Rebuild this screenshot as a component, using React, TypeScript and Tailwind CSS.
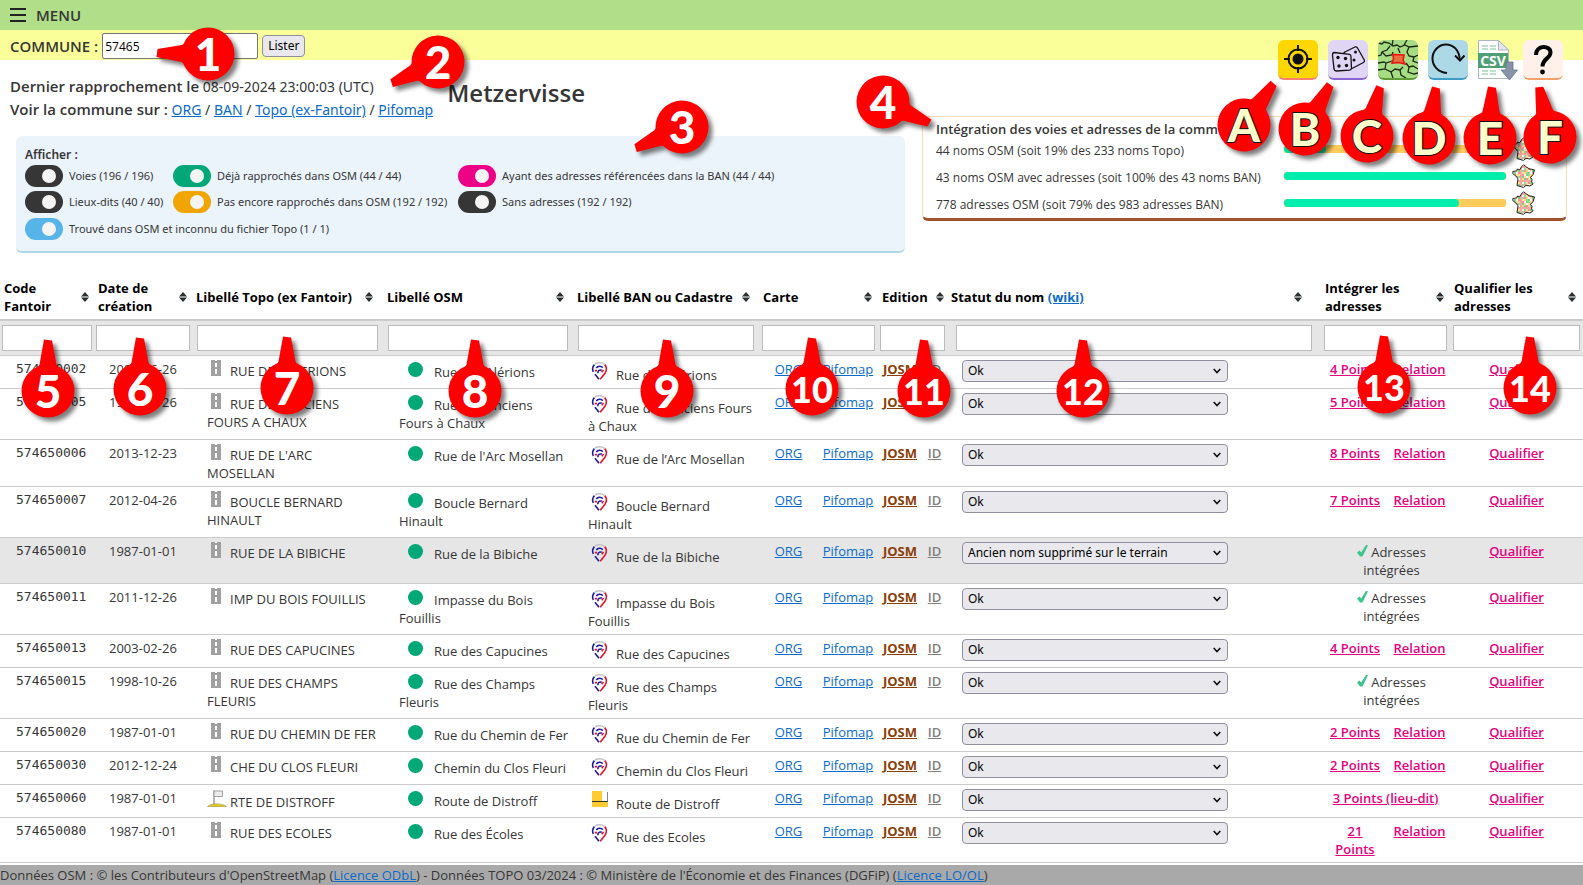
import React from "react";

type Row = {
  code: string;
  date: string;
  topo: string;
  osm: string;
  ban: string;
  status?: string;
  points?: string;
  done?: boolean;
  place?: boolean;
};

const rows: Row[] = [
  { code: "574650002", date: "2003-06-26", topo: "RUE DES ALERIONS", osm: "Rue des Alérions", ban: "Rue des Alérions", points: "4 Points" },
  { code: "574650005", date: "1998-10-26", topo: "RUE DES ANCIENS FOURS A CHAUX", osm: "Rue des Anciens Fours à Chaux", ban: "Rue des Anciens Fours à Chaux", points: "5 Points" },
  { code: "574650006", date: "2013-12-23", topo: "RUE DE L'ARC MOSELLAN", osm: "Rue de l'Arc Mosellan", ban: "Rue de l’Arc Mosellan", points: "8 Points" },
  { code: "574650007", date: "2012-04-26", topo: "BOUCLE BERNARD HINAULT", osm: "Boucle Bernard Hinault", ban: "Boucle Bernard Hinault", points: "7 Points" },
  { code: "574650010", date: "1987-01-01", topo: "RUE DE LA BIBICHE", osm: "Rue de la Bibiche", ban: "Rue de la Bibiche", status: "Ancien nom supprimé sur le terrain", done: true },
  { code: "574650011", date: "2011-12-26", topo: "IMP DU BOIS FOUILLIS", osm: "Impasse du Bois Fouillis", ban: "Impasse du Bois Fouillis", done: true },
  { code: "574650013", date: "2003-02-26", topo: "RUE DES CAPUCINES", osm: "Rue des Capucines", ban: "Rue des Capucines", points: "4 Points" },
  { code: "574650015", date: "1998-10-26", topo: "RUE DES CHAMPS FLEURIS", osm: "Rue des Champs Fleuris", ban: "Rue des Champs Fleuris", done: true },
  { code: "574650020", date: "1987-01-01", topo: "RUE DU CHEMIN DE FER", osm: "Rue du Chemin de Fer", ban: "Rue du Chemin de Fer", points: "2 Points" },
  { code: "574650030", date: "2012-12-24", topo: "CHE DU CLOS FLEURI", osm: "Chemin du Clos Fleuri", ban: "Chemin du Clos Fleuri", points: "2 Points" },
  { code: "574650060", date: "1987-01-01", topo: "RTE DE DISTROFF", osm: "Route de Distroff", ban: "Route de Distroff", points: "3 Points (lieu-dit)", place: true },
  { code: "574650080", date: "1987-01-01", topo: "RUE DES ECOLES", osm: "Rue des Écoles", ban: "Rue des Ecoles", points: "21 Points" },
];

const headers: { label: React.ReactNode; name: string; span?: number }[] = [
  { name: "Code Fantoir", label: <>Code<br />Fantoir</> },
  { name: "Date de création", label: <>Date de<br />création</> },
  { name: "Libellé Topo", label: "Libellé Topo (ex Fantoir)" },
  { name: "Libellé OSM", label: "Libellé OSM" },
  { name: "Libellé BAN ou Cadastre", label: "Libellé BAN ou Cadastre" },
  { name: "Carte", label: "Carte", span: 2 },
  { name: "Edition", label: "Edition", span: 2 },
  { name: "Statut du nom", label: <>Statut du nom <a href="#wiki" className="text-[#0b6bcb] underline">(wiki)</a></> },
  { name: "Intégrer les adresses", label: <>Intégrer les<br />adresses</>, span: 2 },
  { name: "Qualifier les adresses", label: <>Qualifier les<br />adresses</> },
];

const link = "text-[#0b6bcb] underline";
const pink = "font-semibold text-[#e6007e] underline";
const cell = "border-b border-[#ccc] py-1 align-top";

function SortIcon() {
  return (
    <svg viewBox="0 0 8 10" className="h-[10px] w-2 shrink-0">
      <path d="M4 0 8 4.500H0z M0 5.500h8L4 10z" fill="#2b3033" />
      <path d="M0 4.500h8v1H0z" fill="#9a9d9f" />
    </svg>
  );
}

function RoadIcon() {
  return (
    <svg viewBox="0 0 20 16" className="mr-[3px] inline-block h-4 w-5 align-baseline">
      <path d="M4 0h10v16H4z" fill="#a0a0a0" />
      <path d="M8 0h2v1H8z M8 3h2v4H8z M8 9h2v5H8z" fill="#fff" />
    </svg>
  );
}

function FlagIcon() {
  return (
    <svg viewBox="0 0 20 18" className="mr-[3px] inline-block h-[18px] w-5 align-baseline">
      <path d="M.5 17.500c3-3.500 14-3.500 19 0z" fill="#e3c91d" stroke="#a09030" strokeWidth=".6" />
      <path d="M7 1.500V15.500" stroke="#888" strokeWidth="1.200" />
      <path d="M7 2h8.500v5.500H7z" fill="#ececec" stroke="#999" strokeWidth=".9" />
    </svg>
  );
}

function DotIcon() {
  return (
    <svg viewBox="0 0 31 17" className="mr-1 inline-block h-[17px] w-[31px] align-baseline">
      <circle cx="16.500" cy="9.500" r="7.500" fill="#00a878" />
    </svg>
  );
}

function BanIcon() {
  return (
    <svg viewBox="0 0 24 20" fill="none" strokeWidth="1.600" className="mr-1 inline-block h-5 w-6 align-baseline">
      <path d="M7 4C9.500 2.300 14 2.200 16.500 4.300" stroke="#c4c4c4" />
      <path d="M6.400 4.600C4.300 7 4.200 9.500 5.300 11.800M7 14.200 11 19.300" stroke="#1c1c9c" />
      <path d="M16.700 4.600C19.200 7.300 18.800 10.300 17 13.200L12.200 19.300" stroke="#e1142c" />
      <path d="M8.300 8C9.800 5.900 13 5.700 14.800 7.600" stroke="#1c1c9c" />
      <path d="M9.800 13.200C10 10.500 11.500 9.300 13.800 10.300" stroke="#1c1c9c" />
      <path d="M6.800 10.600h2.300M13.800 12.400l1.600-2.600" stroke="#e1142c" />
    </svg>
  );
}

function CadastreIcon() {
  return (
    <svg viewBox="0 0 24 20" className="mr-1 inline-block h-5 w-6 align-baseline">
      <path d="M4 2h10v10h6v6H4z" fill="#ffcb31" />
      <path d="M4 12.500h16" stroke="#333" strokeWidth="1" />
      <path d="M19.500 3v9.500" stroke="#777" strokeWidth=".9" />
    </svg>
  );
}

function FranceIcon() {
  const colours = ["#ff8f8f", "#7fd18a", "#ffe07a", "#f7a7a0", "#ffffff", "#8fdc9a", "#ffd9a0"];
  const dots: React.ReactNode[] = [];
  for (let y = 2; y < 22; y += 2) {
    for (let x = 2; x < 22; x += 2) {
      dots.push(<rect key={`${x}-${y}`} x={x} y={y} width="2" height="2" fill={colours[(x * 3 + y * 5 + ((x * y) >> 2)) % 7]} />);
    }
  }
  const shape = "M11.500.8l3 2.200 2.500 1.700 5.500 1.200-1.400 4.600-2.600 3.100 1.600 1.700-.6 2.600 1.600 2-3.100 2.100-4-.7-2.500 2.100-6.500-1.800 1-6.800-2.100-2.800L.9 9.800.8 7.500l4-.6.5-1.800 2.600.6L9.300 3z";
  return (
    <svg viewBox="0 0 24 24" className="mb-1 size-6 shrink-0">
      <clipPath id="france-shape"><path d={shape} /></clipPath>
      <g clipPath="url(#france-shape)">{dots}</g>
      <path d={shape} fill="none" stroke="#222" strokeWidth="1" />
    </svg>
  );
}

const toggles: { label: string; color: string; wide?: boolean }[] = [
  { label: "Voies (196 / 196)", color: "bg-[#363636]" },
  { label: "Déjà rapprochés dans OSM (44 / 44)", color: "bg-[#00a878]" },
  { label: "Ayant des adresses référencées dans la BAN (44 / 44)", color: "bg-[#ee0086]" },
  { label: "Lieux-dits (40 / 40)", color: "bg-[#363636]" },
  { label: "Pas encore rapprochés dans OSM (192 / 192)", color: "bg-[#f0a500]" },
  { label: "Sans adresses (192 / 192)", color: "bg-[#363636]" },
  { label: "Trouvé dans OSM et inconnu du fichier Topo (1 / 1)", color: "bg-[#56b4e9]", wide: true },
];

const stats = [
  { label: "44 noms OSM (soit 19% des 233 noms Topo)", value: 19 },
  { label: "43 noms OSM avec adresses (soit 100% des 43 noms BAN)", value: 100 },
  { label: "778 adresses OSM (soit 79% des 983 adresses BAN)", value: 79 },
];

const callouts = [
  { text: "1", x: 208, y: 54, tx: 157, ty: 53 },
  { text: "2", x: 438, y: 62, tx: 392, ty: 83 },
  { text: "3", x: 682, y: 127, tx: 636, ty: 148 },
  { text: "4", x: 883, y: 102, tx: 929, ty: 123 },
  { text: "A", x: 1244, y: 125, tx: 1274, ty: 83 },
  { text: "B", x: 1305, y: 129, tx: 1330, ty: 85 },
  { text: "C", x: 1367, y: 136, tx: 1380, ty: 87 },
  { text: "D", x: 1429, y: 138, tx: 1436, ty: 87 },
  { text: "E", x: 1490, y: 138, tx: 1492, ty: 86 },
  { text: "F", x: 1550, y: 137, tx: 1539, ty: 86 },
  { text: "5", x: 48, y: 391, tx: 48, ty: 340 },
  { text: "6", x: 140, y: 389, tx: 140, ty: 338 },
  { text: "7", x: 287, y: 388, tx: 287, ty: 336 },
  { text: "8", x: 475, y: 391, tx: 475, ty: 340 },
  { text: "9", x: 667, y: 391, tx: 667, ty: 339 },
  { text: "10", x: 812, y: 389, tx: 812, ty: 338 },
  { text: "11", x: 924, y: 391, tx: 924, ty: 340 },
  { text: "12", x: 1083, y: 391, tx: 1083, ty: 340 },
  { text: "13", x: 1384, y: 387, tx: 1384, ty: 335 },
  { text: "14", x: 1530, y: 388, tx: 1530, ty: 336 },
];

function Callout({ text, x, y, tx, ty }: (typeof callouts)[number]) {
  const angle = (Math.atan2(tx - x, y - ty) * 180) / Math.PI;
  const letter = /[A-F]/.test(text);
  const tone = letter
    ? "text-[46px] font-black text-[#ffffcc] [-webkit-text-stroke:2px_#111] [paint-order:stroke_fill]"
    : text.length > 1
      ? "text-[36px] font-black text-white"
      : "text-[46px] font-black text-white";
  return (
    <div className="pointer-events-none absolute flex size-14 -translate-x-1/2 -translate-y-1/2 items-center justify-center" style={{ left: x, top: y }}>
      <svg viewBox="-28 -28 56 56" className="absolute inset-0 size-14 overflow-visible drop-shadow-[4px_4px_2px_rgba(0,0,0,0.5)]">
        <g transform={`rotate(${angle})`} fill="#fe0000">
          <circle r="26.500" />
          <path d="M-4-51.500 4-50.500 8.500-26.500Q9.500-24 12-22H-12Q-9.500-24-8.500-26.500z" />
        </g>
      </svg>
      <span className={`relative font-['Lato',sans-serif] leading-none ${tone}`}>{text}</span>
    </div>
  );
}

function Toolbar() {
  const base = "size-10 shrink-0 overflow-hidden rounded-md border-b-2";
  return (
    <nav aria-label="Outils" className="absolute top-10 right-5 flex gap-[10px]">
      <button aria-label="Localiser" className={`${base} border-[#fa8072] bg-[#ffd700]`}>
        <svg viewBox="0 0 40 38" className="w-10" fill="none" stroke="#111" strokeWidth="2">
          <circle cx="20" cy="19" r="9.500" />
          <circle cx="20" cy="19" r="5.500" fill="#111" stroke="none" />
          <path d="M20 5v6M20 27v6M6 19h6M28 19h6" />
        </svg>
      </button>
      <button aria-label="Commune au hasard" className={`${base} border-[#8a63d2] bg-[#e0d5f5]`}>
        <svg viewBox="0 0 40 38" className="w-10" fill="none" stroke="#111" strokeWidth="1.300" strokeLinejoin="round">
          <path d="M15.500 13.500 16.800 12 27 7Q28.500 6.500 29.500 8L36.300 20Q37 21.500 35.500 22.500L24 28.500" />
          <path d="M6.300 12.500 21.500 14.300Q22.800 14.500 22.900 16L23.500 28Q23.500 30 21.500 30.200L8.200 31Q6.500 31 6 29L4.500 15Q4.500 12.500 6.300 12.500z" />
          <g fill="#111" stroke="none">
            <circle cx="10" cy="17.500" r="1.700" /><circle cx="17.500" cy="18.500" r="1.700" />
            <circle cx="11" cy="26" r="1.700" /><circle cx="18.500" cy="25.500" r="1.700" />
            <circle cx="27.500" cy="12" r="1.500" /><circle cx="26" cy="20" r="1.500" />
          </g>
        </svg>
      </button>
      <button aria-label="Communes voisines" className={`${base} border-[#5f9c35] bg-[#a6dc83]`}>
        <svg viewBox="0 0 40 38" className="w-10" fill="none" stroke="#1c2a14" strokeWidth="1.300">
          <path d="M0 3l4 1 2-2 5 1 4 3 4-1 3 2 5-2 4 2 9-1M14 6l1-6M26 5l3-5M31 7l-2 5 2 4 5 1 4-2M0 16l3-1 1-3 5-2 3-4M4 12l4 4 6-1 1-3M0 23l6-1 2 1 6-2M8 23l-1 6-7 1M7 29l6 3 2 6M13 32l4-3 5 1 3-3M22 30l1 5 5 3M28 23l3 4 4-1 5 3M31 27l-1 5 6 2 4-1M36 17l-1 4 5 2M20 8l2 5" />
          <path d="M15 14.500l11 .5-1 5 2 4-6-1.500-7 .5 1.500-4z" fill="#e8703f" stroke="#f01010" strokeWidth="1.600" />
        </svg>
      </button>
      <button aria-label="Rafraîchir" className={`${base} border-[#3b9cc4] bg-[#add8e6]`}>
        <svg viewBox="0 0 40 38" className="w-10" fill="none" stroke="#111" strokeWidth="2">
          <path d="M19 33C9 32 4.500 25 4.500 18.500C4.500 11 10.500 4.500 18 4.500C25.500 4.500 31.500 10.500 31.800 20" />
          <path d="M27 15.500 32 20.500 36.500 15.500" />
        </svg>
      </button>
      <button aria-label="Export CSV" className="h-10 w-[35px] shrink-0">
        <svg viewBox="0 0 40 40" className="h-10 w-10">
          <path d="M.5.500h20l10 9.500v28.500H.5z" fill="#fff" stroke="#aeb6c2" />
          <path d="M20.500.500v9.500h10z" fill="#e4e8ee" stroke="#aeb6c2" />
          <path d="M4 6h6M12 6h6M4 9h6M12 9h6M4 31h6M12 31h6M4 34h6M12 34h6" stroke="#a9d6bb" strokeWidth="1.500" />
          <path d="M0 13h30v15H0z" fill="#4e9f76" />
          <text x="15" y="25.500" textAnchor="middle" fontSize="14" fontWeight="700" fill="#fff" fontFamily="Open Sans, sans-serif">CSV</text>
          <path d="M28 22h7v8h4.500L31.500 40 23 30h5z" fill="#8794a8" stroke="#66738a" strokeWidth=".8" />
        </svg>
      </button>
      <button aria-label="Aide" className={`${base} border-[#f4a06a] bg-[#fff0ea]`}>
        <svg viewBox="0 0 40 38" className="w-10" fill="none" stroke="#000" strokeWidth="4">
          <path d="M13 15C13 4.500 27.500 5 27.500 12.500C27.500 18.500 19.500 18.500 19.500 26.500" />
          <circle cx="19.500" cy="32" r="2.400" fill="#000" stroke="none" />
        </svg>
      </button>
    </nav>
  );
}

export default function App() {
  return (
    <div className="relative flex min-h-screen w-full flex-col overflow-x-hidden bg-white font-['Open_Sans',sans-serif] text-[#363636]">
      <header>
        <div className="flex h-[30px] items-center bg-[#b0de89] px-[10px]">
          <button className="flex items-center gap-[10px] text-[15px] font-semibold">
            <svg viewBox="0 0 16 14" className="h-[14px] w-4"><path d="M0 1h16M0 7h16M0 13h16" stroke="#222" strokeWidth="2" /></svg>
            MENU
          </button>
        </div>
        <form className="flex h-[30px] items-center bg-[#fbff99] px-[10px] pt-[2px]" onSubmit={(e) => e.preventDefault()}>
          <label htmlFor="commune" className="mr-1 text-[15px] font-semibold">COMMUNE :</label>
          <input id="commune" defaultValue="57465" className="h-[26px] w-[156px] rounded-xs border border-[#767676] bg-white px-[2px] text-[12px] text-black" />
          <button className="ml-1 h-[22px] rounded border border-[#8f8f9d] bg-[#e9e9ed] px-[5px] font-['Noto_Sans',sans-serif] text-[12px] leading-none text-black">Lister</button>
        </form>
      </header>

      <Toolbar />

      <section className="flex items-start pr-4">
        <div className="min-w-0 flex-1">
          <div className="flex items-start px-[10px] pt-[15px]">
            <p className="font-['Noto_Sans',sans-serif] text-[14px] leading-[23px] whitespace-nowrap">
              <span className="font-['Open_Sans',sans-serif] text-[15px] font-semibold">Dernier rapprochement le</span> 08-09-2024 23:00:03 (UTC)
              <br />
              <span className="font-['Open_Sans',sans-serif] text-[15px] font-semibold">Voir la commune sur :</span> <a href="#org" className={link}>ORG</a> / <a href="#ban" className={link}>BAN</a> /{" "}
              <a href="#topo" className={link}>Topo (ex-Fantoir)</a> / <a href="#pifomap" className={link}>Pifomap</a>
            </p>
            <h1 className="ml-[14px] pt-[2px] text-[24px] leading-8 font-semibold">Metzervisse</h1>
          </div>
          <fieldset className="mt-[15px] mr-[17px] ml-4 h-[117px] rounded-md border-b-2 border-[#add8e6] bg-[#ebf4fb] px-[9px] pt-[9px] font-['Noto_Sans',sans-serif] text-[11px]">
            <p className="pt-px text-[12px] leading-[17px] font-semibold">Afficher :</p>
            <div className="mt-[2px] grid grid-cols-[148px_285px_auto] gap-y-1">
              {toggles.map((t) => (
                <label key={t.label} className={`flex items-center gap-[6px] whitespace-nowrap ${t.wide ? "col-span-3 mt-px" : ""}`}>
                  <input
                    type="checkbox"
                    defaultChecked
                    className={`relative h-[22px] w-[38px] shrink-0 appearance-none rounded-full before:absolute before:top-1 before:left-[17px] before:size-[14px] before:rounded-full before:bg-[#f4f4f4] ${t.color}`}
                  />
                  {t.label}
                </label>
              ))}
            </div>
          </fieldset>
        </div>
        <aside className="mt-14 w-[645px] rounded-md border border-b-3 border-[#f5deb3] border-b-[#a0522d] px-[13px] text-[12px]">
          <h2 className="pt-1 text-[13px] leading-4 font-semibold whitespace-nowrap">Intégration des voies et adresses de la commune</h2>
          {stats.map((s) => (
            <div key={s.label} className="flex h-[27px] items-center">
              <span className="w-[348px] shrink-0 pt-px leading-[18px] whitespace-nowrap">{s.label}</span>
              <div role="progressbar" aria-valuenow={s.value} aria-label={s.label} className="mr-[6px] mb-1 h-2 w-[222px] overflow-hidden rounded-xs bg-[#ffcb5b]">
                <div className="h-full rounded bg-[#00eeab]" style={{ width: `${s.value}%` }} />
              </div>
              <FranceIcon />
            </div>
          ))}
        </aside>
      </section>

      <main className="mt-[22px] mb-[22px]">
        <table className="w-full table-fixed border-separate border-spacing-0 text-[13px] leading-[18px]">
          <colgroup>
            <col className="w-[94px]" />
            <col className="w-[98px]" />
            <col className="w-[191px]" />
            <col className="w-[190px]" />
            <col className="w-[186px]" />
            <col className="w-[59px]" />
            <col className="w-[60px]" />
            <col className="w-[44px]" />
            <col className="w-[25px]" />
            <col />
            <col className="w-[68px]" />
            <col className="w-[61px]" />
            <col className="w-[133px]" />
          </colgroup>
          <thead>
            <tr>
              {headers.map((h) => (
                <th key={h.name} colSpan={h.span} className="border-b-2 border-[#ccc] py-1 text-left font-bold text-black">
                  <div className="flex w-[95%] items-center justify-between pl-1 whitespace-nowrap">
                    <span>{h.label}</span>
                    <SortIcon />
                  </div>
                </th>
              ))}
            </tr>
            <tr>
              {headers.map((h) => (
                <td key={h.name} colSpan={h.span} className="border-b border-[#ccc] bg-[#e6e6e6] py-1 text-center">
                  <input aria-label={`Filtrer ${h.name}`} className="mx-auto block h-[26px] w-[95%] border border-[#bbb] bg-white px-1" />
                </td>
              ))}
            </tr>
          </thead>
          <tbody>
            {rows.map((r) => (
              <tr key={r.code} className={r.status ? "bg-[#e6e6e6]" : ""}>
                <td className={`${cell} pl-4 font-['DejaVu_Sans_Mono',monospace]`}>{r.code}</td>
                <td className={`${cell} pl-[15px]`}>{r.date}</td>
                <td className={`${cell} pr-1 pl-[15px]`}>{r.place ? <FlagIcon /> : <RoadIcon />}{r.topo}</td>
                <td className={`${cell} pr-1 pl-4`}><DotIcon />{r.osm}</td>
                <td className={`${cell} pr-1 pl-[15px]`}>{r.place ? <CadastreIcon /> : <BanIcon />}{r.ban}</td>
                <td className={`${cell} text-center`}><a href="#org" className={link}>ORG</a></td>
                <td className={`${cell} text-center`}><a href="#pifomap" className={link}>Pifomap</a></td>
                <td className={`${cell} text-center`}><a href="#josm" className="font-bold text-[#8b3f08] underline">JOSM</a></td>
                <td className={`${cell} text-center`}><a href="#id" className="font-semibold text-[#808080] underline">ID</a></td>
                <td className={`${cell} pl-[15px]`}>
                  <div className="relative w-[266px]">
                    <select aria-label={`Statut de ${r.topo}`} className="block h-[22px] w-full appearance-none rounded border border-[#8f8f9d] bg-[#e9e9ed] px-[5px] font-['Noto_Sans',sans-serif] text-[12px] leading-[20px] text-black">
                      <option>{r.status ?? "Ok"}</option>
                    </select>
                    <svg viewBox="0 0 8 6" className="pointer-events-none absolute top-2 right-[7px] h-[6px] w-2" fill="none" stroke="#111" strokeWidth="1.600"><path d="M.7 1 4 4.500 7.300 1" /></svg>
                  </div>
                </td>
                {r.done ? (
                  <td colSpan={2} className={`${cell} pr-1 pl-4 text-center`}>
                    <div className="pt-px">
                      <svg viewBox="0 0 11 12" className="mr-[3px] inline-block h-3 w-[11px] align-baseline"><path d="M0 7.500 2.500 5.500l1.700 2L9 0l2 .3-5.500 11.200H3z" fill="#3cc48a" /></svg>
                      Adresses<br />intégrées
                    </div>
                  </td>
                ) : r.place ? (
                  <td colSpan={2} className={`${cell} text-center`}><a href="#points" className={pink}>{r.points}</a></td>
                ) : (
                  <>
                    <td className={`${cell} px-[6px] text-center`}><a href="#points" className={pink}>{r.points}</a></td>
                    <td className={`${cell} text-center`}><a href="#relation" className={pink}>Relation</a></td>
                  </>
                )}
                <td className={`${cell} text-center`}><a href="#qualifier" className={pink}>Qualifier</a></td>
              </tr>
            ))}
          </tbody>
        </table>
      </main>

      <footer className="fixed inset-x-0 bottom-0 h-5 bg-[#a9a9a9] text-[13px] leading-5 whitespace-nowrap">
        Données OSM : © les Contributeurs d'OpenStreetMap (<a href="#odbl" className={link}>Licence ODbL</a>) - Données TOPO 03/2024 : © Ministère de l'Économie et des Finances (DGFiP) (
        <a href="#lool" className={link}>Licence LO/OL</a>)
      </footer>

      {callouts.map((c) => (
        <Callout key={c.text} {...c} />
      ))}
    </div>
  );
}
